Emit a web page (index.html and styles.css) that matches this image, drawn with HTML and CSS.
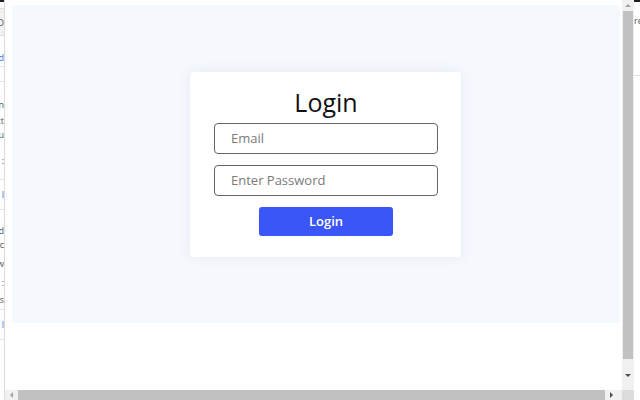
FILE: index.html
```html
<!DOCTYPE html>
<html>
<head>
<meta charset="utf-8">
<link rel="stylesheet" href="styles.css">
</head>
<body>
<div class="screen">
  <div class="side-left">
    <div class="bar-black"></div>
    <div class="sl-row sl-box"><span class="frag">O</span></div>
    <div class="sl-row gap-12"></div>
    <div class="sl-row h18"><span class="frag link">d</span></div>
    <div class="sl-row sep h15"></div>
    <div class="sl-row sep h14"></div>
    <div class="sl-row h18"><span class="frag">n</span></div>
    <div class="sl-row h14"><span class="frag">xt</span></div>
    <div class="sl-row h14"><span class="frag">u</span></div>
    <div class="sl-row h38"><span class="frag">:</span></div>
    <div class="sl-row sep h30"><span class="frag link">l</span></div>
    <div class="sl-row sep h14"></div>
    <div class="sl-row h14"><span class="frag">d</span></div>
    <div class="sl-row h14"><span class="frag">c</span></div>
    <div class="sl-row h24"><span class="frag">w</span></div>
    <div class="sl-row h14"><span class="frag">:</span></div>
    <div class="sl-row h20"><span class="frag">s</span></div>
    <div class="sl-row sep h30"><span class="frag link">l</span></div>
    <div class="sl-row sep"></div>
  </div>

  <div class="viewport">
    <div class="frame">
      <div class="panel">
        <form class="card">
          <h1 class="title">Login</h1>
          <input class="field" type="text" placeholder="Email">
          <input class="field" type="password" placeholder="Enter Password">
          <button class="btn" type="button">Login</button>
        </form>
      </div>
    </div>
    <div class="vscroll">
      <div class="vbtn"><span class="tri-up"></span></div>
      <div class="vthumb"></div>
      <div class="vbtn vbtn-down"><span class="tri-down"></span></div>
    </div>
    <div class="hscroll">
      <div class="hbtn"><span class="tri-left"></span></div>
      <div class="hthumb"></div>
      <div class="hbtn"><span class="tri-right"></span></div>
    </div>
    <div class="corner"></div>
  </div>

  <div class="side-right">
    <div class="bar-black"></div>
    <div class="sr-row"><span class="frag-r">re</span></div>
    <div class="sr-line"></div>
  </div>
</div>
</body>
</html>
```

FILE: styles.css
```css
* { box-sizing: border-box; }

html, body {
  margin: 0;
  padding: 0;
  width: 640px;
  height: 400px;
  overflow: hidden;
  background: #ffffff;
  font-family: "Open Sans", "Liberation Sans", sans-serif;
}

.screen {
  display: grid;
  grid-template-columns: 5px 629px 6px;
  height: 400px;
}

/* left clipped sidebar */
.side-left {
  display: flex;
  flex-direction: column;
  overflow: hidden;
  border-right: 1px solid #dcdcdc;
  background: #ffffff;
}
.bar-black {
  height: 2px;
  background: #222;
  flex: none;
}
.sl-row {
  display: flex;
  justify-content: flex-end;
  align-items: center;
  flex: none;
  height: 14px;
  font-size: 9px;
  color: #555;
  white-space: nowrap;
}
.sl-box {
  height: 28px;
  margin-top: 6px;
  background: #f1f1f1;
  border-top: 1px solid #ddd;
  border-bottom: 1px solid #ddd;
}
.gap-12 { height: 12px; }
.h14 { height: 14px; }
.h15 { height: 15px; }
.h18 { height: 18px; }
.h20 { height: 20px; }
.h24 { height: 24px; }
.h30 { height: 30px; }
.h38 { height: 38px; }
.sep { border-top: 1px solid #e2e2e2; }
.frag { flex: none; }
.link { color: #3b6fd6; }

/* main viewport */
.viewport {
  display: grid;
  grid-template-columns: 617px 12px;
  grid-template-rows: 390px 10px;
}

.frame {
  background: #ffffff;
  overflow: hidden;
  padding: 5px 2px 0 7px;
}

.panel {
  height: 318px;
  background: #f5f8fd;
  display: flex;
  align-items: center;
  justify-content: center;
  padding-left: 19px;
}

.card {
  width: 271px;
  height: 185px;
  background: #ffffff;
  border-radius: 4px;
  box-shadow: 0 0 12px rgba(120, 140, 180, 0.12);
  padding: 12px 23px 20px 24px;
  display: flex;
  flex-direction: column;
  align-items: center;
  margin: 0;
}

.title {
  margin: 0 0 3px;
  font-size: 25px;
  line-height: 36px;
  font-weight: 400;
  color: #111;
}

.field {
  width: 224px;
  height: 31px;
  margin: 0 0 11px;
  border: 1.5px solid #666;
  border-radius: 4px;
  padding: 0 16px;
  font-family: inherit;
  font-size: 13px;
  color: #333;
  background: #fff;
  outline: none;
}
.field::placeholder {
  color: #7a7a7a;
}

.btn {
  width: 134px;
  height: 29px;
  border: none;
  border-radius: 3px;
  background: #3a56f8;
  color: #ffffff;
  font-family: inherit;
  font-size: 13px;
  font-weight: 600;
  padding: 0;
  cursor: pointer;
}

/* scrollbars */
.vscroll {
  background: #f1f1f1;
  display: flex;
  flex-direction: column;
  align-items: center;
}
.vbtn {
  height: 10px;
  width: 100%;
  display: flex;
  align-items: center;
  justify-content: center;
  flex: none;
}
.vbtn-down { height: 20px; padding-bottom: 2px; align-items: flex-end; }
.vthumb {
  width: 10px;
  height: 348px;
  margin-top: 1px;
  background: #c1c1c1;
  flex: none;
}
.tri-up {
  width: 0; height: 0;
  border-left: 3px solid transparent;
  border-right: 3px solid transparent;
  border-bottom: 3px solid #a3a3a3;
}
.tri-down {
  width: 0; height: 0;
  border-left: 3px solid transparent;
  border-right: 3px solid transparent;
  border-top: 3px solid #505050;
}

.hscroll {
  background: #f1f1f1;
  display: flex;
  align-items: center;
}
.hbtn {
  width: 13px;
  height: 10px;
  display: flex;
  align-items: center;
  justify-content: center;
  flex: none;
}
.hthumb {
  height: 10px;
  width: 587px;
  background: #c1c1c1;
  flex: none;
}
.tri-left {
  width: 0; height: 0;
  border-top: 3px solid transparent;
  border-bottom: 3px solid transparent;
  border-right: 3px solid #a3a3a3;
}
.tri-right {
  width: 0; height: 0;
  border-top: 3px solid transparent;
  border-bottom: 3px solid transparent;
  border-left: 3px solid #505050;
}
.corner { background: #dcdcdc; }

/* right clipped strip */
.side-right {
  display: flex;
  flex-direction: column;
  overflow: hidden;
}
.sr-row {
  height: 30px;
  padding-top: 12px;
  font-size: 9px;
  color: #555;
  white-space: nowrap;
}
.sr-line {
  margin-top: 43px;
  height: 1px;
  background: #e2e2e2;
}
```
